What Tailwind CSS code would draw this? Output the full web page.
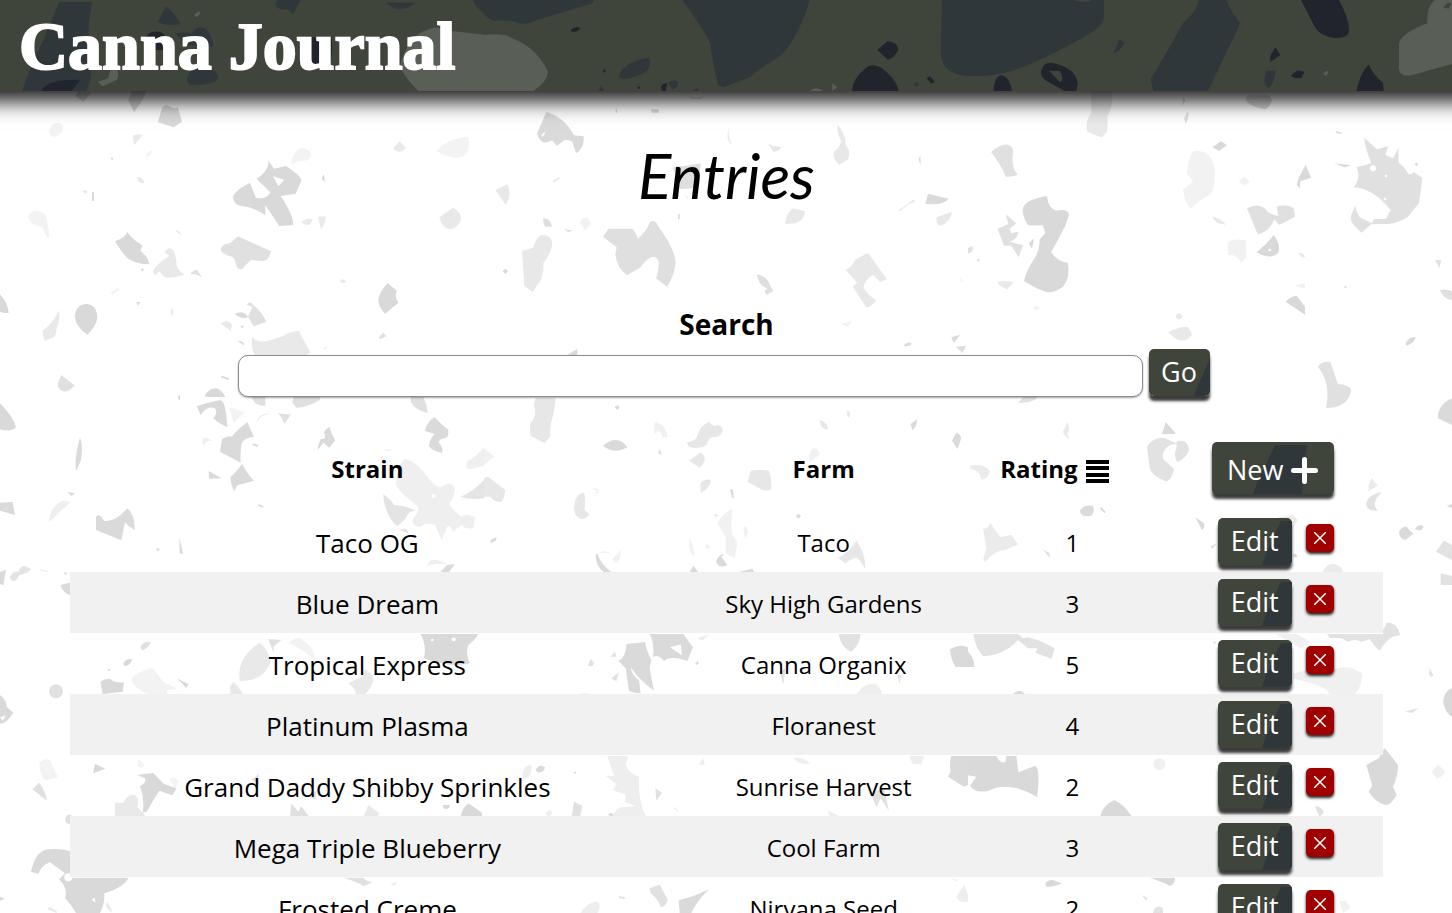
<!DOCTYPE html>
<html lang="en">
<head>
<meta charset="utf-8">
<meta name="viewport" content="width=device-width, initial-scale=1">
<title>Canna Journal</title>
<script src="https://cdn.jsdelivr.net/npm/@tailwindcss/browser@4"></script>
</head>
<body class="bg-white text-black font-['Segoe_UI','Open_Sans','Noto_Sans',sans-serif]">
<div class="relative isolate min-h-screen overflow-hidden">

<!-- Terrazzo backdrop -->
<svg class="absolute inset-x-0 top-0 -z-10 w-full" viewBox="0 0 1452 913" preserveAspectRatio="xMidYMin slice" aria-hidden="true">
<g transform="translate(0 100) scale(.33333)" fill-rule="evenodd">
<path fill="#d9d9d9" d="M487 20L500 15Q530 30 533 20L546 65L521 82L474 67ZM385 0L395-27H440L428 0L402 37ZM225-12L235-27L275-22L250 5ZM804 181L822 206L858 198Q900 225 905 240L887 281L842 288Q880 345 880 375L838 378L796 315V346Q765 322 725 318Q700 315 699 290Q703 272 750 248Q762 280 768 293Q800 300 811 277L770 237Q810 210 804 181ZM819 229L835 258L853 239ZM345 424Q378 412 382 395Q392 415 427 436L421 452Q448 475 447 493Q408 492 385 476Q368 462 345 424ZM224 650Q228 612 260 612Q292 615 292 655Q288 680 262 704Q228 680 224 650ZM0 583Q25 610 26 639Q10 640 0 635ZM965 238L971 222L975 245ZM1135 600Q1138 575 1163 549L1191 573Q1182 590 1195 608L1155 641Q1135 620 1135 600ZM704 642Q730 628 744 652Q725 658 704 642ZM0 910Q40 950 48 982Q30 998 0 988ZM613 890Q625 865 648 865Q665 868 676 892ZM591 919Q630 905 662 901Q678 905 682 982Q655 970 640 955Q655 940 645 925Q620 915 602 946ZM276 277h6v26h-6ZM662 832l3-5 22 8-2 5ZM722 680l4-4 5 4-4 5ZM332 176l4-4 5 4-4 4ZM422 508l5-3 5 5-5 4ZM712 722l12 2 10 8-3 4ZM532 892l8-8v18Z"/>
<path fill="#e0e0e0" d="M663 445Q668 432 690 430L714 409L813 454Q808 480 790 483Q770 484 755 479Q735 495 728 506Q715 510 710 500Q705 475 697 470Q670 465 663 452ZM573 519Q590 500 598 520L607 533Q590 520 573 522ZM744 650L758 620L740 614Q750 600 760 615Q785 635 799 665L761 679ZM183 825L224 856Q205 878 190 874Q172 868 174 850ZM756 885H796V917Q765 918 756 895ZM877 908Q878 890 890 885H960V900Q920 922 890 924ZM1232 885H1268Q1280 910 1284 939Q1245 930 1232 905ZM834 940L872 944L853 972Q845 950 834 940ZM1137 712l12-14 11 10-20 10ZM408 606h14l-8 11Z"/>
<path fill="#e9e9e9" d="M458 515Q465 495 508 467L493 457Q505 440 515 446Q527 455 530 495Q535 512 553 524Q520 535 495 532Q485 525 480 515Q470 515 468 527ZM176 631Q182 665 170 685Q168 710 160 713L134 722Q125 700 130 690Q165 665 176 631ZM399 106Q410 102 428 104L403 136Q398 120 399 106ZM412 232q12-4 22 16q-20 6-22-16ZM1180 143L1199 124L1218 143Q1200 165 1180 147ZM1318 352L1359 323Q1384 335 1383 360Q1370 388 1350 388Q1325 385 1318 352ZM905 367q15-15 32-9q-3 18-15 17q-12-1-17-8ZM954 350L978 349Q975 375 963 387ZM663 671Q680 655 696 675L692 693ZM756 711Q775 730 800 724L850 708Q870 695 896 692L931 757Q925 766 910 766L765 766Q753 750 756 711ZM770 965Q775 940 812 940Q780 945 772 965ZM1020 543q10-12 18 3q-10 8-18-3ZM525 393q8-6 18 6v5ZM248 272q12-4 15 4l-8 6ZM513 628h6v16h-5ZM970 750l10-13v8Z"/>
<path fill="#f3f3f3" d="M85 350Q90 330 115 332Q145 340 142 370Q150 400 147 415Q130 400 128 382Q90 375 85 350ZM147 92Q155 68 175 68Q192 72 188 92Q175 112 160 110Q147 105 147 92ZM438 165L452 150L458 155L443 172ZM872 192Q885 145 905 145Q935 148 934 168Q925 185 900 183ZM1309 154Q1340 115 1404 111Q1412 140 1400 160Q1380 190 1309 154ZM689 921L735 937L700 970ZM331 578l22-14 4 6-20 14Z"/>
</g>
<g transform="translate(0 360) scale(.33333)">
<path fill="#dadada" d="M666 238Q685 225 695 230Q715 205 742 187L762 231Q735 232 725 250Q720 280 722 308L660 275ZM727 312Q740 340 762 362L712 376L703 393Q690 370 692 350Q705 340 727 312ZM626 333L664 355L627 356ZM953 271Q955 250 962 238L970 236Q980 235 972 218Q975 208 988 201Q995 225 1006 241L988 263L970 248ZM1274 212Q1285 180 1304 171Q1325 195 1344 208Q1348 228 1338 234Q1318 235 1316 248Q1332 265 1326 278Q1300 275 1286 258Q1290 235 1304 222ZM240 232Q250 260 243 300L228 334Q222 295 240 232ZM0 428L38 426L45 465L0 452ZM288 470Q298 458 312 482Q345 488 382 445Q405 465 404 510Q385 500 375 487L364 541L288 510ZM1342 615L1365 612L1345 639H1318ZM0 636L18 630L10 676L0 672ZM181 675L210 668V705Q190 700 181 675ZM202 396l24 4-12 8ZM538 530L549 582L539 580ZM776 432l15 7-4 4-12-6ZM757 250l18 5-2 6-14-5ZM468 568l5-5 6 5-5 6ZM192 640l5-4 4 4-4 5Z"/>
<path fill="#efefef" d="M148 486Q145 450 180 425Q195 420 210 428ZM1188 375Q1192 310 1215 297Q1250 302 1290 360Q1305 378 1320 382Q1350 362 1364 380Q1368 400 1348 432Q1360 455 1385 470Q1400 458 1425 472L1420 505Q1395 508 1385 495L1358 515Q1350 490 1342 500L1325 539L1305 495Q1275 485 1260 502Q1230 495 1240 475Q1255 460 1255 440Q1200 400 1188 375ZM1400 305Q1430 290 1452 262V318Q1430 320 1425 325Q1410 330 1400 325ZM1281 617Q1290 595 1310 600L1345 612Q1315 608 1281 617ZM606 245q5-22 29-2q-20-5-22 15ZM120 627l24 6-2 4-20-5ZM1154 268h18v4h-18Z"/>
<path fill="#e4e4e4" d="M1149 402Q1170 415 1183 436Q1215 435 1247 453Q1225 450 1218 475L1192 498Q1155 470 1149 402ZM1198 510q25-10 28 10ZM1382 410Q1420 395 1452 360V415Q1410 420 1382 410ZM30 650Q40 632 55 635Q60 618 75 618L94 628Q75 645 58 645Q48 665 40 663Q28 660 30 650Z"/>
<circle cx="1301" cy="408" r="6" fill="#fff"/>
</g>
<g transform="translate(484 100) scale(.33333)">
<path fill="#dadada" d="M187 36Q240 50 270 106L299 109Q302 145 276 160L264 124Q248 118 240 121L219 138L204 121Q190 130 176 127Q158 110 160 98ZM1332 281L1394 296Q1375 318 1324 311ZM250 764L280 747V766ZM1402 712L1428 704L1410 729ZM1258 737q15-15 25-6q-10 12-25 6ZM500 28h24v10h-20ZM395 26h4v12h-4ZM1304 180l5-15 1 30ZM56 514l8-8 8 8-8 8ZM582 343h5v14h-5ZM610-14q20 12 50 2l-8 8h-28Z"/>
<path fill="#dfdfdf" d="M565 203Q575 198 600 198L650 190L645 260Q600 270 575 265Q580 240 578 225ZM357 410L373 386H445Q460 405 461 417Q490 390 498 365Q515 358 522 378Q575 450 575 490Q570 530 549 560L516 535Q525 515 524 483Q515 465 500 472Q480 485 470 502L429 526Q400 505 394 465L398 442ZM178 355Q200 355 204 380H184Q176 370 178 355ZM238 385q13 8 27 4q-5 8-13 7ZM819 522Q850 530 858 555L868 574L847 585L842 573L850 566Q822 555 819 522ZM1415 740l32-3-12 22Z"/>
<path fill="#e8e8e8" d="M114 453L148 443Q155 410 175 405Q205 405 205 435Q200 460 178 490Q180 530 165 548L146 577L121 557ZM34 270L70 253Q85 285 65 314ZM206 243l20-13 2 5-18 13ZM1061 74Q1085 100 1085 135Q1102 155 1092 178L1065 195Q1045 175 1050 155Q1070 140 1071 122Q1058 100 1061 74ZM852 131Q870 140 892 142Q885 156 868 155ZM735 85Q730 105 744 135Q722 115 735 85ZM1245 330L1292 297V305Q1265 315 1248 335ZM1358 352L1404 335Q1402 365 1368 378Q1355 370 1358 352ZM1086 510Q1105 500 1115 478L1152 459L1209 538L1188 546L1168 524Q1135 545 1140 565Q1150 585 1177 600Q1165 620 1147 623L1106 559L1120 549ZM903 372Q905 345 925 325L963 333Q962 360 935 370ZM602 280l10 14-3 4Z"/>
<path fill="#f2f2f2" d="M288 368Q292 352 312 353L320 372L304 391ZM1070 670q20 0 34-8l-12 20ZM1425 525l12 22-5 2Z"/>
<path fill="#fff" d="M172 105l10-10v8l-8 8Z"/>
</g>
<g transform="translate(484 400) scale(.33333)">
<path fill="#dadada" d="M357 137Q400 100 431 142Q390 165 357 137ZM340 460Q350 495 385 518H362Q335 500 335 465ZM696 485Q705 460 722 462L712 470L730 495Q705 508 696 485ZM765 516L805 506L813 519H765ZM615 519L628 497L645 519ZM18 430L22 418L38 412L36 422ZM738 268h8l4 25h-6ZM1280 72L1299 58Q1298 85 1285 90ZM1404 122Q1415 98 1420 98Q1435 110 1430 120L1421 147ZM392 22l8-7 7 7-7 8ZM936 348l8-7 7 7-8 8ZM687 342l14 3-2 5ZM523 160l4-14 6 20Z"/>
<path fill="#e7e7e7" d="M155-6H214Q215 20 202 65Q196 80 200 108L182 129L140 108Q135 85 140 70Q160 45 150 15ZM608 127Q638 125 640 105Q650 75 675 66Q685 75 690 78Q715 70 716 92Q710 112 688 111Q675 110 668 135Q645 150 615 140ZM615 182L650 157Q675 175 648 203ZM800 212Q830 207 855 212Q862 230 862 268Q850 275 835 270L791 245ZM649 250Q665 235 681 240Q680 262 650 279ZM270 320Q275 280 300 278Q305 290 302 330L316 342Q305 360 290 357Q270 350 270 320ZM0 235L12 230L64 270Q60 300 50 307Q30 305 20 290L0 290ZM1117 421Q1145 460 1144 508Q1130 480 1118 473Q1100 475 1085 490L1062 475Q1100 455 1117 421ZM1007 59Q1035 70 1032 90Q1008 85 1007 59ZM1089 34h8v18h-6Z"/>
<path fill="#f1f1f1" d="M512 66Q545 70 551 112L535 112Q528 80 510 105ZM0 145L31 170L0 195ZM700 370Q720 335 745 327Q740 370 745 405Q765 425 758 440L752 475L725 460V410ZM384 478L411 450Q410 485 395 489ZM975 170Q980 145 990 144Q1010 152 1006 165L974 188ZM778 390q6-25 14 5q-5 20-9 18ZM617 415Q630 440 632 470Q612 460 617 415ZM662 440l8-8 9 8-9 8ZM344 460q12-12 32-1q-18 0-32 1ZM320 268q25-10 24 8l-20 20q18-20 12-26Z"/>
</g>
<g transform="translate(968 100) scale(.33333)">
<path fill="#d9d9d9" d="M833 0Q835-12 845-14H905L912 0Q905 25 890 28Q845 20 833 0ZM164 330Q165 300 237 288Q240 325 265 332Q300 325 303 345Q295 375 280 400Q262 435 250 455Q265 485 299 488Q308 530 285 560Q260 578 240 577Q210 570 168 543Q175 510 200 475Q215 450 215 418L232 399L224 375Q200 378 180 375Q165 355 164 330ZM183 430L198 415L192 447ZM733 142L758 124L777 135L754 153ZM993 232L1013 194L1029 233L997 244L995 265L986 255ZM865 457Q895 435 917 405Q940 435 930 460Q905 480 865 457ZM953 605Q965 590 986 587L1011 620V644ZM1313 730Q1325 708 1343 711Q1340 730 1315 737ZM1098 190L1150 196L1130 202ZM1103 93l19 5-3 4-15-4ZM27 480l5-3 4 4-5 4ZM1340 193l5-5 6 5-6 6ZM1128 561l4-4 4 4-4 4ZM645-8l8 8-10 18Z"/>
<path fill="#e0e0e0" d="M69 156Q100 132 120 134Q140 140 134 165Q130 200 149 225Q130 232 113 230Q100 195 69 156ZM113 342L145 370L125 386L130 400L150 395Q152 415 125 425L165 436L152 472L130 437L108 437L89 386L121 372ZM837 325Q870 308 890 325Q900 342 931 348L926 320Q955 312 977 324L981 350L934 375L919 358Q905 395 869 403ZM1188 113L1227 148L1260 139L1252 165L1275 175L1291 144L1292 188Q1315 205 1320 222Q1335 225 1336 215L1363 234L1353 310L1318 352Q1280 375 1250 372L1210 373L1180 398Q1140 365 1150 345L1162 315Q1165 345 1180 355L1212 370L1218 358L1254 356L1268 330Q1215 265 1157 262Q1180 235 1166 202L1210 190Q1195 155 1188 113ZM1050 800Q1065 780 1088 787L1109 852Q1150 855 1149 875Q1135 925 1074 924Q1090 850 1050 800ZM1416 570Q1440 565 1452 575V600Q1425 598 1416 570ZM1401 480L1419 480L1415 504ZM0 445l12-8q8 18-12 24ZM648 55L661 33Q665 50 653 72Z"/>
<path fill="#e9e9e9" d="M370-27H433V0Q430 30 418 50Q420 80 417 95L402 112Q375 105 357 93Q352 60 370 38ZM88 546Q110 540 137 547L118 568Q95 562 88 546ZM733 350Q755 352 774 374Q740 372 733 350ZM600 697Q630 680 657 680Q675 695 670 708Q650 730 625 717ZM622 650q10-20 22 0q-10 15-22 0ZM991 458q18 0 20 12q-10 8-20-12Z"/>
<path fill="#f2f2f2" d="M657 222Q662 160 680 152Q735 150 741 215Q742 270 725 285Q690 300 669 326Q650 310 645 270L676 244ZM812 245L828 230L846 245L830 258ZM779 430Q790 415 833 420L836 470L820 490Q805 460 780 465ZM981 556L1011 550V567ZM195 625q10-12 20-2q-8 10-20 2Z"/>
<g fill="#fff"><circle cx="1215" cy="205" r="9"/><circle cx="905" cy="450" r="4"/><circle cx="1254" cy="228" r="4"/><circle cx="1251" cy="297" r="4"/></g>
</g>
<g transform="translate(968 400) scale(.33333)">
<path fill="#dadada" d="M582 103L593 66L624 101ZM335 332Q350 312 375 318Q382 335 370 347Q340 355 335 332ZM395 325l5-3 13 13-4 5ZM1293 395Q1305 378 1315 380L1336 402L1312 420Q1293 415 1293 395ZM1342 384Q1355 370 1367 380Q1360 397 1342 388ZM1410 55Q1408 15 1452-5V75ZM682 352L708 370Q712 385 702 390ZM973 465q8-10 15 2q-6 12-15-2ZM729 440l18-12-14 18ZM1436 318l16-6v12Z"/>
<path fill="#e2e2e2" d="M537 140Q555 110 590 115L630 132Q600 130 590 150Q580 165 588 180L618 207Q610 245 592 244Q550 225 545 205ZM626 124Q660 115 663 150Q655 175 628 187Q615 165 625 148ZM1242 276Q1195 285 1195 315Q1198 335 1230 332Q1205 310 1242 276ZM1404 455L1428 422L1452 435V480ZM1418 520L1452 528V555H1418ZM150 9L165-9H208Q200 8 150 9ZM225 448L245 460V475Z"/>
<path fill="#ebebeb" d="M6 197Q50 190 65 212Q60 240 38 238Q42 215 6 205ZM45 385Q60 390 66 368L97 412L130 404L151 434L110 450Q80 450 51 487L46 475L55 445ZM285 95L297 67Q310 85 298 102L305 118Q288 110 285 95ZM1202 255L1210 234L1230 257L1202 273ZM930 352L975 345L989 360L972 390ZM1062 519Q1075 490 1100 492Q1125 500 1125 519Z"/>
</g>
<g transform="translate(0 630) scale(.33333)" fill-rule="evenodd">
<path fill="#d9d9d9" d="M301 155Q315 145 330 146Q345 160 372 157L368 185L308 192ZM0 195Q20 210 20 230L40 248Q15 285 0 280ZM370 100Q378 85 397 87Q390 110 372 108ZM1262 12H1435Q1425 30 1405 45Q1395 75 1410 100Q1350 115 1272 85Q1280 45 1262 12ZM530 145l36 18-8 12-10-14ZM279 430L285 402L316 416ZM412 435Q440 430 460 429L492 462L530 475L517 496L478 482Q460 510 440 545L428 548Q435 510 420 468Q440 460 435 445ZM93 725Q105 670 135 660Q170 652 210 663V743H385Q375 770 313 790Q315 820 300 849H228Q215 825 195 804Q205 775 177 748L195 730L150 697Q125 705 115 732ZM1382 561Q1385 535 1405 520L1446 548V561ZM1328 525h22q-2 12-10 12q-12 0-12-12ZM322 120l5-4 4 4-4 4ZM0 800l14 6-14 6Z"/>
<path fill="#e0e0e0" d="M147 184a21 21 0 1 0 42 0a21 21 0 1 0-42 0ZM422 50Q430 32 453 37Q440 60 425 60ZM805 27L844 30L820 50L822 72ZM97 477L118 458Q140 490 140 512ZM195 568Q200 552 212 554L219 561H210V582Q195 580 195 568ZM870 561L874 520L895 545L903 528L928 561ZM1030 743H1090Q1100 755 1118 757L1092 768Q1070 755 1030 743ZM755 450l20-18 2 32ZM930 500l20-20-5 30Z"/>
<path fill="#e9e9e9" d="M718 140Q715 80 779 38Q805 60 812 95Q790 155 720 153ZM690 170L700 155Q725 180 729 195H692ZM1045 160L1085 140L1095 118Q1125 135 1118 155Q1115 175 1092 195H1070Q1065 175 1045 160ZM345 518L370 518Q385 490 405 495Q420 505 412 530L438 560H345ZM1090 561L1105 525L1138 550L1130 561ZM320 815Q335 830 335 848L318 830ZM142 838l6-8 22 12v7ZM1170 765l20-10-5 10Z"/>
<path fill="#f3f3f3" d="M394 150Q400 130 457 113L490 155L532 177L502 180L500 195H455Q405 180 394 150ZM865 40Q885 20 900 25Q945 50 945 93Q915 60 865 40ZM118 398Q130 385 148 388L173 440Q150 452 130 448Q118 420 118 398ZM415 388L435 405Q425 420 413 408ZM508 447Q525 437 537 455L525 475Z"/>
<g fill="#fff"><circle cx="205" cy="742" r="12"/><circle cx="1361" cy="28" r="6"/><circle cx="1297" cy="30" r="4"/><path d="M275 810l8-8 4 16ZM0 262l18-6-10 16Z"/></g>
</g>
<g transform="translate(484 630) scale(.33333)" fill-rule="evenodd">
<path fill="#dadada" d="M428 42L483 36Q490 70 502 90L497 115L510 182Q470 155 440 112Q445 140 465 150L470 190Q450 190 435 182L425 115L403 92Q425 85 428 42ZM497 12H598L627 52L610 93Q560 75 540 93Q520 70 507 82Q512 40 497 12ZM558 52L590 43L594 76ZM1398 58Q1425 40 1452 52V111H1415Q1400 90 1398 58ZM1402 378H1452V465L1440 470L1392 440L1400 425Q1395 400 1402 378ZM584 811Q630 800 676 777Q640 810 622 849H587ZM155 420Q165 400 183 412Q180 430 160 427ZM634 100l8-8 2 8-6 6ZM372 553l10-5 8 8-10 4ZM270 428l4-4 4 4-4 4Z"/>
<path fill="#e1e1e1" d="M312 108L320 87L330 100L325 108ZM382 145l23-18-8 27ZM380 80l12-15 6 15ZM1064 12H1130Q1125 50 1100 66Q1070 50 1064 12ZM886 125L905 115L898 162ZM1240 135h12l-6 27ZM270 515L295 527L288 561H263ZM514 475L534 488L517 512ZM1158 490L1200 475L1215 543L1190 505L1178 532ZM497 775L527 764L552 810Q545 830 530 832Q525 810 500 790ZM405 798l18 4-2 6-16-5ZM565 527l20 18-10-5Z"/>
<path fill="#eee" d="M1117 195Q1140 155 1175 162Q1195 175 1192 195ZM278 195q20-10 50 0ZM370 378H432L425 405Q435 432 465 440Q462 520 487 561H385Q395 535 412 532L455 528L423 515L425 495L387 480L397 463L365 437L390 438ZM116 435Q118 405 140 405Q148 420 135 440L117 450ZM183 550l15-10 8 8-12 12ZM928 384Q960 380 978 402Q945 405 928 384ZM1275 378H1320L1312 402H1287ZM1030 541L1072 561H1040ZM290 849Q310 815 340 815Q355 825 340 849ZM1417 800L1440 764L1452 795V815Q1425 820 1417 800ZM1400 745l20 4v6ZM644 405l14-20 4 20ZM640 25l35-13-20 20Z"/>
</g>
<g transform="translate(968 630) scale(.33333)">
<path fill="#d9d9d9" d="M0 65Q20 85 18 111H0ZM132 195Q145 180 160 184L175 195ZM0 378H85Q95 400 112 397L115 378H145L151 427L203 407Q218 420 207 501Q120 450 60 483Q20 490 6 467L25 440L0 436ZM397 561Q400 530 439 510Q470 525 493 561ZM232 762Q238 748 255 750L281 760Q260 772 235 770ZM547 743H621Q622 762 605 768L590 760ZM1195 405L1232 385L1250 354L1290 405Q1290 440 1275 470L1286 495Q1270 525 1252 525Q1220 515 1202 485L1213 467ZM1425 215Q1430 180 1452 175V262Q1430 245 1425 215ZM736 38l4-4 4 4-4 4Z"/>
<path fill="#e2e2e2" d="M17 12H150L165 25L180 22L215 32L260 55L251 87L202 68L208 55L180 55L150 30Q110 75 45 79Q20 50 17 12ZM1077 12H1245V0L1258-23Q1290-20 1296 15L1275 20Q1255 30 1235 62Q1215 45 1205 28L1180 35Q1160 25 1140 35L1120 25L1085 24ZM1040 528Q1060 530 1068 545L1055 562ZM555 845Q565 820 585 835V849H555ZM1385 115l12 22-8 4-6-8ZM520 795l18 8-2 10ZM1310 245l43-12-20 16Z"/>
<path fill="#f0f0f0" d="M556 403a18 18 0 1 0 36 0a18 18 0 1 0-36 0ZM1390 425L1411 404L1432 425Q1420 445 1405 444ZM922 12H985L1028 35L1000 55ZM975 130Q1060 110 1085 125Q1110 108 1150 113L1182 130Q1180 200 1130 202Q1080 200 1078 180L1040 163L975 145ZM1115 815Q1135 805 1147 835L1125 849Z"/>
</g>
</svg>

<!-- The header runs past both window edges so that its shadow stays even -->
<header class="relative -mx-10 flex h-[91px] items-center bg-[#3f453b] px-[59px] shadow-[0_10px_20px_rgba(0,0,0,0.9)]">
<svg class="absolute inset-y-0 left-10 h-full w-[calc(100%-80px)]" viewBox="0 0 1452 91" preserveAspectRatio="xMidYMin slice" aria-hidden="true">
<g transform="scale(.33333)">
<path fill="#30373b" d="M178 6H276Q262 80 264 170Q275 210 273 230L260 273H66Q95 190 130 120ZM474 65L497 20Q520 30 541 72Q500 80 474 65ZM525 100Q560 95 575 100Q590 75 615 85Q640 110 640 140L560 135ZM560 240Q570 205 590 190Q650 200 655 235Q640 258 570 255ZM832 0H902L880 42L860 27Q830 30 827 15ZM1158 8H1245Q1225 30 1185 26ZM1418 0H1452V40Q1430 25 1418 0Z"/>
<path fill="#22242d" d="M122 273Q150 235 240 240L215 273ZM435 120Q440 90 480 95Q500 105 497 120V150H440ZM925 112H995Q1000 180 985 205H930Z"/>
<path fill="#595f57" d="M293 245L325 235L335 190L352 205Q358 235 350 240L308 259ZM582 45L595 33L602 40L590 52ZM1200 200Q1220 110 1280 90Q1310 75 1330 90L1453 104V273H1255Q1220 240 1200 200Z"/>
</g>
<g transform="translate(484 0) scale(.33333)">
<path fill="#595f57" d="M0 105Q60 98 85 115Q160 145 192 215Q190 245 148 273H0ZM1045 250L1060 262L1045 273ZM980 270l15-5 22 5-5 3h-30Z"/>
<path fill="#30373b" d="M0 0H330L325 10L160 60Q120 78 100 68Q80 58 30 62Q10 55 0 42ZM595 0H978Q930 150 870 180Q840 195 800 230L720 262Q700 260 700 245Q680 160 680 130Q650 75 595 0ZM404 232Q410 190 495 172Q505 205 480 218Q430 245 404 232ZM1374 0H1453V228Q1375 225 1370 160ZM552 250Q565 235 582 245Q585 265 565 268ZM345 273l6-18 10 18ZM1290 253l10-8 5 10-8 8ZM628 273l10-12 8 12Z"/>
<path fill="#22242d" d="M1180 150L1210 124Q1240 125 1243 150Q1230 175 1212 179ZM1104 273Q1105 235 1150 200Q1165 190 1190 202Q1240 240 1244 273ZM260 92Q268 78 290 83Q280 98 262 95ZM1328 235l10-7 14 18-10 5ZM530 262L537 252L550 250L545 273H535ZM356 213l5-5 5 5-5 5ZM460 263l5-5 5 5-5 5Z"/>
</g>
<g transform="translate(968 0) scale(.33333)">
<path fill="#30373b" d="M0 0H408V55Q400 85 350 110Q160 215 90 222Q50 230 0 227ZM693 0H776Q785 30 817 70L720 273H556L548 237Q590 170 645 70Q685 35 693 0ZM436 160L454 117L471 128Q455 155 436 160ZM895 213L924 211Q915 262 900 263Q880 250 895 213Z"/>
<path fill="#22242d" d="M999 0H1113Q1145 60 1143 95Q1140 114 1100 114Q1055 108 1040 80ZM906 187L908 165L922 142L937 165ZM968 227L988 211L1010 215L1000 234Q980 238 968 227ZM1165 273Q1180 210 1203 194Q1215 225 1245 248L1247 273ZM76 273Q80 228 100 225Q125 230 132 273ZM219 215Q225 185 255 189Q325 205 329 250L325 273H290L235 242Q218 230 219 215Z"/>
<path fill="#3f453b" d="M243 212L275 213Q292 240 275 246ZM315 0h58q-20 12-58 0Z"/>
<path fill="#595f57" d="M1293 130Q1300 100 1378 70Q1375 20 1400 0H1453V192L1330 226Q1300 232 1293 210ZM1065 220l12-8 5 5-8 12Z"/>
<path fill="#3f453b" d="M1425 22l15-14 10 2-8 16Z"/>
</g>
</svg>
<p class="relative text-[68px] leading-none font-bold text-white font-['Liberation_Serif',serif] [-webkit-text-stroke:2px_white]">Canna Journal</p>
</header>

<main class="pr-[69px] pl-[70px]">
<h1 class="mt-11 text-center text-[62px] leading-[80px] italic font-['Lato',sans-serif]">Entries</h1>

<form class="mx-auto mt-[89px] flex w-[978px] max-w-full flex-col" onsubmit="return false">
<label for="search" class="text-center text-[28px] leading-[40px] font-bold">Search</label>
<div class="mt-[5px] flex items-start gap-[6px] pr-[6px]">
<input id="search" type="search" class="mt-[6px] h-[42px] min-w-0 flex-1 rounded-[10px] border border-[#8c8c8c] bg-white px-3 text-[24px] shadow-[0_1px_2px_rgba(0,0,0,0.35)]">
<button class="h-[47px] w-[61px] rounded-[5px] bg-[linear-gradient(114deg,#3f453b_79%,#30373b_80%)] text-[27px] text-white shadow-[0_5px_3px_#3c3c3c]">Go</button>
</div>
</form>

<table class="mt-[34px] w-full table-fixed border-collapse text-center">
<colgroup><col class="w-[45.3%]"><col class="w-[24.2%]"><col class="w-[13.7%]"><col class="w-[16.8%]"></colgroup>
<thead>
<tr class="h-20 text-[24px] leading-[36px]">
<th scope="col" class="pb-1 font-bold">Strain</th>
<th scope="col" class="pb-1 font-bold">Farm</th>
<th scope="col" class="pr-9 pb-1 font-bold"><span class="inline-flex items-center gap-2">Rating
<svg class="mt-1 h-[23px] w-[23px]" viewBox="0 0 23 23" aria-hidden="true"><path d="M0 0h23v4H0ZM0 6h23v4H0ZM0 13h23v4H0ZM0 19h23v4H0Z"/></svg></span></th>
<th scope="col" class="pb-[6px] font-normal"><button class="relative isolate mx-auto flex h-[52px] w-[122px] items-center justify-center gap-2 rounded-[5px] bg-[#3f453b] pt-1 text-[27px] text-white shadow-[0_5px_3px_#3c3c3c]">
<svg class="absolute inset-0 -z-10 h-full w-full" viewBox="0 0 122 52" aria-hidden="true"><path fill="#30373b" d="M63 3H95Q92 24 90 52H41Q46 37 54 22Z"/></svg>New
<svg class="h-[27px] w-[27px]" viewBox="0 0 27 27" aria-hidden="true"><path d="M13.500 2.500V24.500M2.500 13.500H24.500" stroke="#fff" stroke-width="5" stroke-linecap="round"/></svg></button></th>
</tr>
</thead>
<tbody id="entries"></tbody>
</table>
</main>
</div>

<script>
const entries = [
  ['Taco OG', 'Taco', 1],
  ['Blue Dream', 'Sky High Gardens', 3],
  ['Tropical Express', 'Canna Organix', 5],
  ['Platinum Plasma', 'Floranest', 4],
  ['Grand Daddy Shibby Sprinkles', 'Sunrise Harvest', 2],
  ['Mega Triple Blueberry', 'Cool Farm', 3],
  ['Frosted Creme', 'Nirvana Seed', 2],
];
document.getElementById('entries').innerHTML = entries.map(([strain, farm, rating]) => `
<tr class="h-[61px] text-[24px] even:bg-[#f1f1f1]">
<td class="pt-[3px] text-[26px]">${strain}</td>
<td class="pt-[2px]">${farm}</td>
<td class="pt-[2px]">${rating}</td>
<td><div class="flex items-start justify-center gap-[14px] pl-[6px]">
<button class="relative isolate h-[47px] w-[74px] rounded-[5px] bg-[#3f453b] text-[27px] text-white shadow-[0_5px_3px_#3c3c3c]">
<svg class="absolute inset-0 -z-10 h-full w-full rounded-[5px]" viewBox="0 0 74 47" aria-hidden="true"><path fill="#30373b" d="M63 3H74V47H44Q48 34 55 20Z"/></svg>Edit</button>
<button aria-label="Delete ${strain}" class="mt-[6px] flex h-7 w-7 items-center justify-center rounded-[5px] bg-[#a00000] shadow-[0_2px_3px_#222]">
<svg class="h-3 w-3" viewBox="0 0 12 12" aria-hidden="true"><path d="M0 0L12 12M12 0L0 12" stroke="#fff" stroke-width="1.500"/></svg></button>
</div></td>
</tr>`).join('');
</script>
</body>
</html>
